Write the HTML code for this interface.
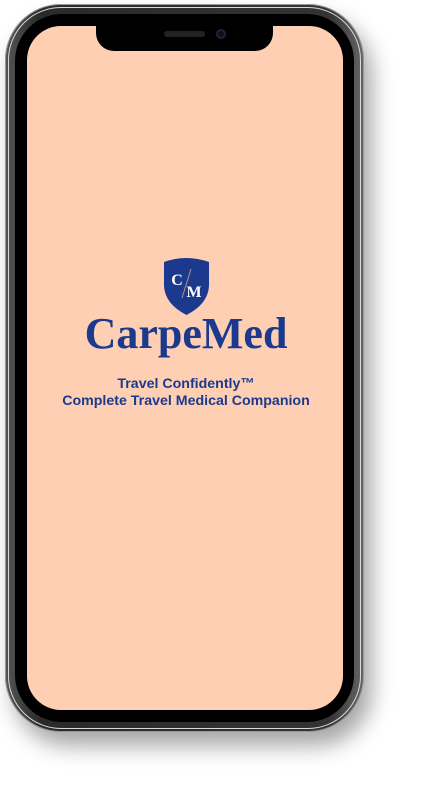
<!DOCTYPE html>
<html><head><style>
body{margin:0;width:422px;height:787px;background:#fff;position:relative;overflow:hidden;font-family:"Liberation Sans",sans-serif}
.phone{position:absolute;left:5px;top:4px;width:359px;height:728px;border-radius:56px;background:linear-gradient(90deg,#555,#2a2a2a 10%,#333 90%,#666);box-shadow:8px 14px 22px rgba(0,0,0,.35),0 0 0 1px #999 inset;}
.ring{position:absolute;left:3px;top:3px;right:3px;bottom:3px;border-radius:53px;border:1.5px solid #d8d8d8;box-sizing:border-box}
.bezel{position:absolute;left:10px;top:10px;right:10px;bottom:10px;border-radius:47px;background:#000}
.screen{position:absolute;left:27px;top:26px;width:316px;height:684px;border-radius:34px;background:#ffcfb3;overflow:hidden}
.notch{position:absolute;left:96px;top:20px;width:177px;height:31px;background:#000;border-radius:0 0 18px 18px}
.spk{position:absolute;left:164px;top:31px;width:41px;height:6px;border-radius:3px;background:#222}
.cam{position:absolute;left:216px;top:29px;width:10px;height:10px;border-radius:5px;background:#111;box-shadow:inset 0 0 0 2px #1b2340}
.logo{position:absolute;left:0;width:372px;text-align:center;color:#1b3a8e}
</style></head><body>
<div class="phone"><div class="ring"></div><div class="bezel"></div></div>
<div class="screen"></div>
<div class="notch"></div><div class="spk"></div><div class="cam"></div>
<svg style="position:absolute;left:162px;top:256px" width="49" height="60" viewBox="0 0 49 60">
<path d="M2 6 Q24 -2 47 6 L47 30 Q46 48 24.5 59 Q3 48 2 30 Z" fill="#1b3a8e"/>
<line x1="29" y1="13" x2="20" y2="42" stroke="#c58b7a" stroke-width="1"/>
<text x="15" y="29" font-family="Liberation Serif" font-weight="bold" font-size="16" fill="#fff" text-anchor="middle">C</text>
<text x="32" y="41" font-family="Liberation Serif" font-weight="bold" font-size="16" fill="#fff" text-anchor="middle">M</text>
</svg>
<div class="logo" style="top:309px;font-family:'Liberation Serif',serif;font-weight:bold;font-size:44px;line-height:50px">CarpeMed</div>
<div class="logo" style="top:376px;font-weight:bold;font-size:14.2px;line-height:17px">Travel Confidently™<br>Complete Travel Medical Companion</div>
</body></html>
